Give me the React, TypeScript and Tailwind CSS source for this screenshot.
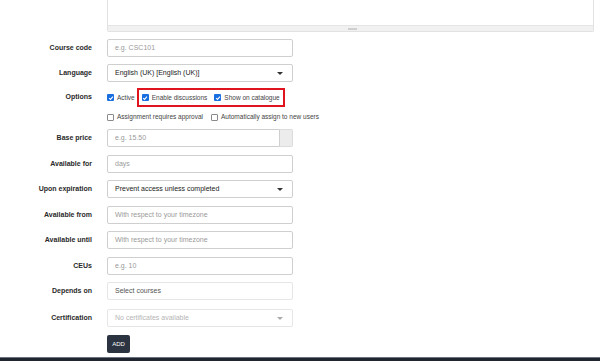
import React from 'react';

const font = { fontFamily: '"Liberation Sans", Arial, sans-serif' };

const Check = ({ checked }: { checked: boolean }) =>
  checked ? (
    <span className="inline-flex w-[7px] h-[7px] bg-[#1a6fe0] rounded-[1px] items-center justify-center shrink-0">
      <svg width="6" height="6" viewBox="0 0 10 10">
        <path d="M2 5.2 L4.2 7.4 L8.2 2.8" stroke="white" strokeWidth="1.8" fill="none" />
      </svg>
    </span>
  ) : (
    <span className="inline-block w-[7px] h-[7px] border border-[#8a8a8a] rounded-[1px] bg-white shrink-0" />
  );

const Caret = ({ light }: { light?: boolean }) => (
  <span
    className={`w-0 h-0 border-l-[3px] border-r-[3px] border-t-[3px] border-l-transparent border-r-transparent ${
      light ? 'border-t-[#aaa]' : 'border-t-[#333]'
    }`}
  />
);

const Row = ({ label, top, children }: { label: string; top: string; children: React.ReactNode }) => (
  <div className={`flex items-center ${top}`}>
    <div className="w-[92px] text-right text-[7px] font-bold text-[#2a2a2a]">{label}</div>
    <div className="ml-[15px]">{children}</div>
  </div>
);

const Input = ({ text, light, dim }: { text: string; light?: boolean; dim?: boolean }) => (
  <div
    className={`w-[186px] h-[18px] border rounded-[2px] bg-white flex items-center px-[7px] text-[7px] ${
      light ? 'border-[#e6e6e6]' : 'border-[#cfcfcf]'
    } ${dim ? 'text-[#555]' : 'text-[#9a9a9a]'}`}
  >
    {text}
  </div>
);

const Select = ({ text, light }: { text: string; light?: boolean }) => (
  <div
    className={`w-[186px] h-[18px] border rounded-[2px] bg-white flex items-center justify-between pl-[7px] pr-[9px] text-[7px] ${
      light ? 'border-[#e6e6e6] text-[#b5b5b5]' : 'border-[#cfcfcf] text-[#222]'
    }`}
  >
    <span>{text}</span>
    <Caret light={light} />
  </div>
);

export default function App() {
  return (
    <div className="w-[600px] h-[361px] bg-white overflow-hidden flex flex-col" style={font}>
      {/* editor box, top cut off */}
      <div className="ml-[107px] w-[487px] h-[32px] border-x border-b border-[#e2e2e2] rounded-b-[2px] flex flex-col justify-end">
        <div className="h-[6px] bg-[#f1f1f1] border-t border-[#e4e4e4] flex items-center pl-[240px]">
          <span className="w-[9px] h-[2px] bg-[#cfcfcf]" />
        </div>
      </div>

      <Row label="Course code" top="mt-[7px]">
        <Input text="e.g. CSC101" />
      </Row>
      <Row label="Language" top="mt-[7px]">
        <Select text="English (UK) [English (UK)]" />
      </Row>

      <Row label="Options" top="mt-[6px]">
        <div className="flex items-center h-[19px] text-[6.5px] text-[#444]">
          <Check checked />
          <span className="ml-[3px]">Active</span>
          <div className="ml-[2px] h-[19px] border-2 border-[#e0141e] flex items-center pl-[3px] pr-[3px]">
            <Check checked />
            <span className="ml-[3px]">Enable discussions</span>
            <span className="ml-[7px] flex items-center">
              <Check checked />
            </span>
            <span className="ml-[3px]">Show on catalogue</span>
          </div>
        </div>
      </Row>
      <div className="flex items-center ml-[107px] mt-[5px] h-[10px] text-[6.5px] text-[#444]">
        <Check checked={false} />
        <span className="ml-[3px]">Assignment requires approval</span>
        <span className="ml-[8px] flex items-center">
          <Check checked={false} />
        </span>
        <span className="ml-[3px]">Automatically assign to new users</span>
      </div>

      <Row label="Base price" top="mt-[7px]">
        <div className="flex w-[186px] h-[18px]">
          <div className="flex-1 border border-[#cfcfcf] rounded-l-[2px] flex items-center px-[7px] text-[7px] text-[#9a9a9a]">
            e.g. 15.50
          </div>
          <div className="w-[13px] bg-[#ececec] border border-l-0 border-[#dcdcdc] rounded-r-[2px]" />
        </div>
      </Row>
      <Row label="Available for" top="mt-[8px]">
        <Input text="days" />
      </Row>
      <Row label="Upon expiration" top="mt-[7px]">
        <Select text="Prevent access unless completed" />
      </Row>
      <Row label="Available from" top="mt-[8px]">
        <Input text="With respect to your timezone" />
      </Row>
      <Row label="Available until" top="mt-[7px]">
        <Input text="With respect to your timezone" />
      </Row>
      <Row label="CEUs" top="mt-[8px]">
        <Input text="e.g. 10" />
      </Row>
      <Row label="Depends on" top="mt-[7px]">
        <Input text="Select courses" light dim />
      </Row>
      <Row label="Certification" top="mt-[9px]">
        <Select text="No certificates available" light />
      </Row>

      <div className="ml-[107px] mt-[8px]">
        <div className="w-[23px] h-[18px] bg-[#2b3440] rounded-[2px] flex items-center justify-center text-[6px] text-white">
          ADD
        </div>
      </div>

      <div className="mt-auto h-[4px] bg-[#1f2630] border-t border-[#6b7380]" />
    </div>
  );
}
